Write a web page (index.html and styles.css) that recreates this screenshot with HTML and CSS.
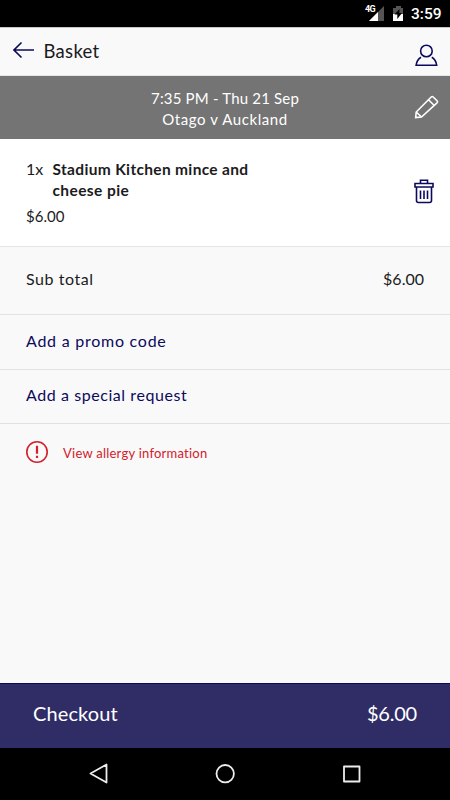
FILE: index.html
```html
<!DOCTYPE html>
<html lang="en">
<head>
<meta charset="utf-8">
<title>Basket</title>
<link rel="stylesheet" href="styles.css">
</head>
<body>
<div class="status">
  <svg width="60" height="27" viewBox="0 0 60 27">
    <path d="M19 21L34 6v15z" fill="#555"/><path d="M19 21l9-9v9z" fill="#fff"/>
    <path d="M43 8h3V6h5v2h2v6H43z" fill="#555"/><path d="M43 14h10v7H43z" fill="#fff"/>
    <path d="M49.500 9l-5 5.500h2.800v4.500l4.700-6h-2.700z" fill="#000"/>
  </svg>
  <span class="network">4G</span>
  <time class="clock">3:59</time>
</div>
<header class="header">
  <svg class="back" width="22" height="18" viewBox="0 0 22 18"><path d="M21 9H1M8.500 1.500L1 9l7.500 7.500"/></svg>
  <h1>Basket</h1>
  <svg class="user" width="24" height="24" viewBox="0 0 24 24"><circle cx="11.400" cy="8" r="5.800"/><path d="M6 14.300C3 16 1.600 18.500 1.100 22.300h20.600c-.5-3.800-1.900-6.300-4.900-8"/></svg>
</header>
<section class="event">
  <p class="when">7:35 PM - Thu 21 Sep</p>
  <p class="match">Otago v Auckland</p>
  <svg class="edit" width="26" height="26" viewBox="0 0 26 26"><path d="M2.700 23.500L3.200 18 18.200 3q1-1 2 0l3.800 3.800q1 1 0 2L8.500 23zM3.200 18L8.500 23M15.500 5.700l5.500 5.500"/></svg>
</section>
<main>
  <section class="item">
    <div class="line"><span class="qty">1x</span><h2><span class="name-a">Stadium Kitchen mince and</span><br><span class="name-b">cheese pie</span></h2></div>
    <p class="price">$6.00</p>
    <svg class="trash" width="20" height="25" viewBox="0 0 20 25"><path d="M1 4.500h18v3.500H1zM6.500 4.500V1.200h7v3.300M2.500 8v13.500q0 2 2 2h11q2 0 2-2V8M6.500 11.500v8.500M10 11.500v8.500M13.500 11.500v8.500"/></svg>
  </section>
  <section class="row subtotal"><span class="sub-label">Sub total</span><span class="sub-price">$6.00</span></section>
  <a class="row promo"><span>Add a promo code</span></a>
  <a class="row request"><span>Add a special request</span></a>
  <a class="allergy"><svg width="22" height="22" viewBox="0 0 22 22"><circle cx="11" cy="11" r="10.200"/><path d="M11 4.800v8M11 14.800v2.200" stroke-width="2.200"/></svg><span>View allergy information</span></a>
</main>
<footer class="checkout"><span class="pay">Checkout</span><span class="total">$6.00</span></footer>
<nav class="nav">
  <svg width="450" height="52" viewBox="0 0 450 52"><path d="M90.500 25.500L106.500 16.500v18zM344 18.500h15.500v15H344z"/><circle cx="225.200" cy="25.700" r="8.700"/></svg>
</nav>
</body>
</html>
```

FILE: styles.css
```css
* { box-sizing: border-box; }
body { margin: 0; width: 450px; height: 800px; display: flex; flex-direction: column; background: #f9f9f9; color: #1b1b1d; font-family: Lato, sans-serif; font-size: 16px; font-variant-ligatures: none; overflow: hidden; }
h1, h2, p { margin: 0; font-weight: 400; }
svg { display: block; fill: none; flex: none; }
span, .when, .match, h1 { white-space: nowrap; }
.status { height: 27px; flex: none; background: #000; color: #fff; position: relative; display: flex; padding-left: 350px; }
.network { position: absolute; left: 365px; top: 4px; font: 700 9px/11px Roboto, sans-serif; letter-spacing: -.7px; }
.clock { font: 500 15.500px/27px Roboto, sans-serif; position: relative; left: 1px; top: 1px; }
.header { height: 49px; flex: none; display: flex; align-items: center; padding: 0 11px 2px 13px; border-bottom: 1px solid #e7e7e7; border-top: 1px solid #c8c8c8; }
.header svg { stroke: #0c0a5c; stroke-width: 1.600; }
.back { margin-top: -1px; }
.header h1 { font-size: 18.500px; line-height: 24px; margin-left: 8.500px; margin-right: auto; letter-spacing: .3px; }
.header .user { margin-top: 8px; }
.event { height: 63px; flex: none; background: #747474; color: #fff; text-align: center; font-size: 15px; line-height: 21px; padding: 12px 0 0; position: relative; }
.when { letter-spacing: .18px; }
.match { letter-spacing: .6px; }
.edit { position: absolute; left: 413px; top: 18px; stroke: #fff; stroke-width: 1.600; }
main { flex: 1; }
.item { height: 108px; background: #fff; border-bottom: 1px solid #e4e4e4; padding: 20px 26px 0; position: relative; }
.line { display: flex; }
.qty { width: 26.500px; line-height: 19px; }
h2 { font-size: 15.500px; line-height: 21px; font-weight: 700; }
.name-a { letter-spacing: .33px; }
.name-b { letter-spacing: .4px; }
.price { font-size: 15px; line-height: 22px; margin-top: 4px; }
.trash { position: absolute; left: 414px; top: 40px; stroke: #0c0a5c; stroke-width: 1.600; }
.row { display: flex; justify-content: space-between; align-items: center; padding: 0 26px; border-bottom: 1px solid #e2e2e2; }
.subtotal { height: 68px; padding-bottom: 4px; }
.sub-label { letter-spacing: .55px; }
.promo { height: 55px; padding-bottom: 4px; color: #0c0a5c; font-size: 16px; letter-spacing: .75px; }
.request { height: 54px; padding-bottom: 4px; color: #0c0a5c; font-size: 16px; letter-spacing: .57px; }
.allergy { height: 56px; display: flex; align-items: center; padding: 0 26px; color: #d3202a; font-size: 13px; letter-spacing: .24px; }
.allergy svg { stroke: #d3202a; stroke-width: 1.600; }
.allergy span { margin-left: 15px; padding-top: 2px; }
.checkout { height: 65px; flex: none; display: flex; justify-content: space-between; background: #302d66; border-top: 1px solid #08085c; color: #fff; font-size: 20px; line-height: 58px; padding: 0 33px; }
.pay { letter-spacing: .1px; }
.total { letter-spacing: -.2px; }
.nav { height: 52px; flex: none; background: #000; }
.nav svg { stroke: #ededed; stroke-width: 1.800; stroke-linejoin: round; }
```
